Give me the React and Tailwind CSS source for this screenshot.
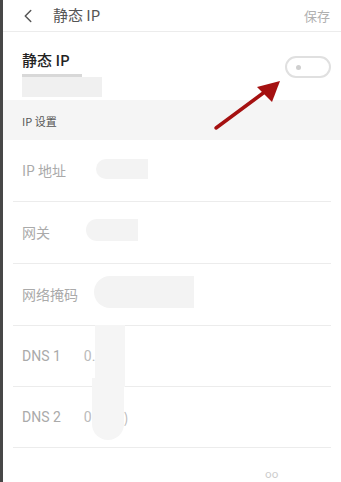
import { ChevronLeft } from 'lucide-react';

const rows = [
  { label: 'IP 地址', blur: 'ml-[30px] w-[52px] h-[20px] mt-[-4px]' },
  { label: '网关', blur: 'ml-[36px] w-[52px] h-[22px] mt-[-6px]' },
  { label: '网络掩码', blur: 'ml-[16px] w-[100px] h-[32px] mt-[-6px]' },
];

function App() {
  return (
    <div className="w-[341px] h-[482px] overflow-hidden bg-white flex font-['Noto_Sans_CJK_SC','Noto_Sans',sans-serif]">
      <div className="w-[3px] shrink-0 bg-[#474747]" />
      <div className="flex-1 flex flex-col relative">
        <div className="h-[32px] flex items-center border-b border-[#ececec]">
          <ChevronLeft className="ml-[14px] h-[22px] w-[22px] text-[#555]" strokeWidth={1.6} />
          <span className="ml-[14px] text-[15px] text-[#555]">静态 IP</span>
          <span className="ml-auto mr-[11px] text-[13px] text-[#b0b0b0]">保存</span>
        </div>

        <div className="h-[68px] flex items-center pl-[19px] pr-[10px]">
          <div className="flex flex-col mt-[14px]">
            <span className="text-[15px] text-[#222] font-medium leading-[20px]">静态 IP</span>
            <div className="mt-[4px] flex flex-col">
              <div className="w-[60px] h-[3px] bg-[#d8d8d8]" />
              <div className="w-[80px] h-[20px] bg-[#f0f0f0]" />
            </div>
          </div>
          <div className="ml-auto mt-[2px] w-[46px] h-[22px] rounded-full border-2 border-[#e0e0e0] flex items-center pl-[9px]">
            <div className="w-[5px] h-[5px] rounded-full bg-[#cfcfcf]" />
          </div>
        </div>

        <div className="h-[40px] bg-[#f5f5f5] flex items-center pl-[19px] pt-[2px]">
          <span className="text-[11px] text-[#555]">IP 设置</span>
        </div>

        {rows.map((r) => (
          <div key={r.label} className="mx-[10px] h-[62px] border-b border-[#ececec] flex items-center pl-[9px]">
            <span className="text-[14px] text-[#aaa]">{r.label}</span>
            <div className={`${r.blur} rounded-l-full bg-[#f3f3f3]`} />
          </div>
        ))}

        <div className="mx-[10px] h-[61px] border-b border-[#ececec] flex items-center pl-[9px]">
          <span className="text-[14px] text-[#aaa] font-['Roboto',sans-serif]">DNS 1</span>
          <span className="ml-[23px] text-[14px] text-[#bbb] font-['Roboto',sans-serif]">0.</span>
          <div className="w-[30px] h-[62px] bg-[#f5f5f5]" />
        </div>

        <div className="mx-[10px] h-[61px] border-b border-[#ececec] flex items-center pl-[9px]">
          <span className="text-[14px] text-[#aaa] font-['Roboto',sans-serif]">DNS 2</span>
          <span className="ml-[23px] text-[14px] text-[#bbb] font-['Roboto',sans-serif]">0</span>
          <div className="w-[32px] h-[62px] mt-[-16px] rounded-b-full bg-[#f5f5f5]" />
          <span className="text-[14px] text-[#bbb]">)</span>
        </div>

        <div className="flex-1 relative">
          <span className="absolute left-[262px] bottom-[2px] text-[11px] leading-[14px] text-[#ccc]">oo</span>
        </div>

        <svg className="absolute left-[207px] top-[76px]" width="80" height="60" viewBox="0 0 80 60">
          <line x1="6" y1="52" x2="60" y2="12" stroke="#a51111" strokeWidth="3.5" strokeLinecap="round" />
          <polygon points="70,5 47,11 62,26" fill="#a51111" />
        </svg>
      </div>
    </div>
  );
}

export default App;
